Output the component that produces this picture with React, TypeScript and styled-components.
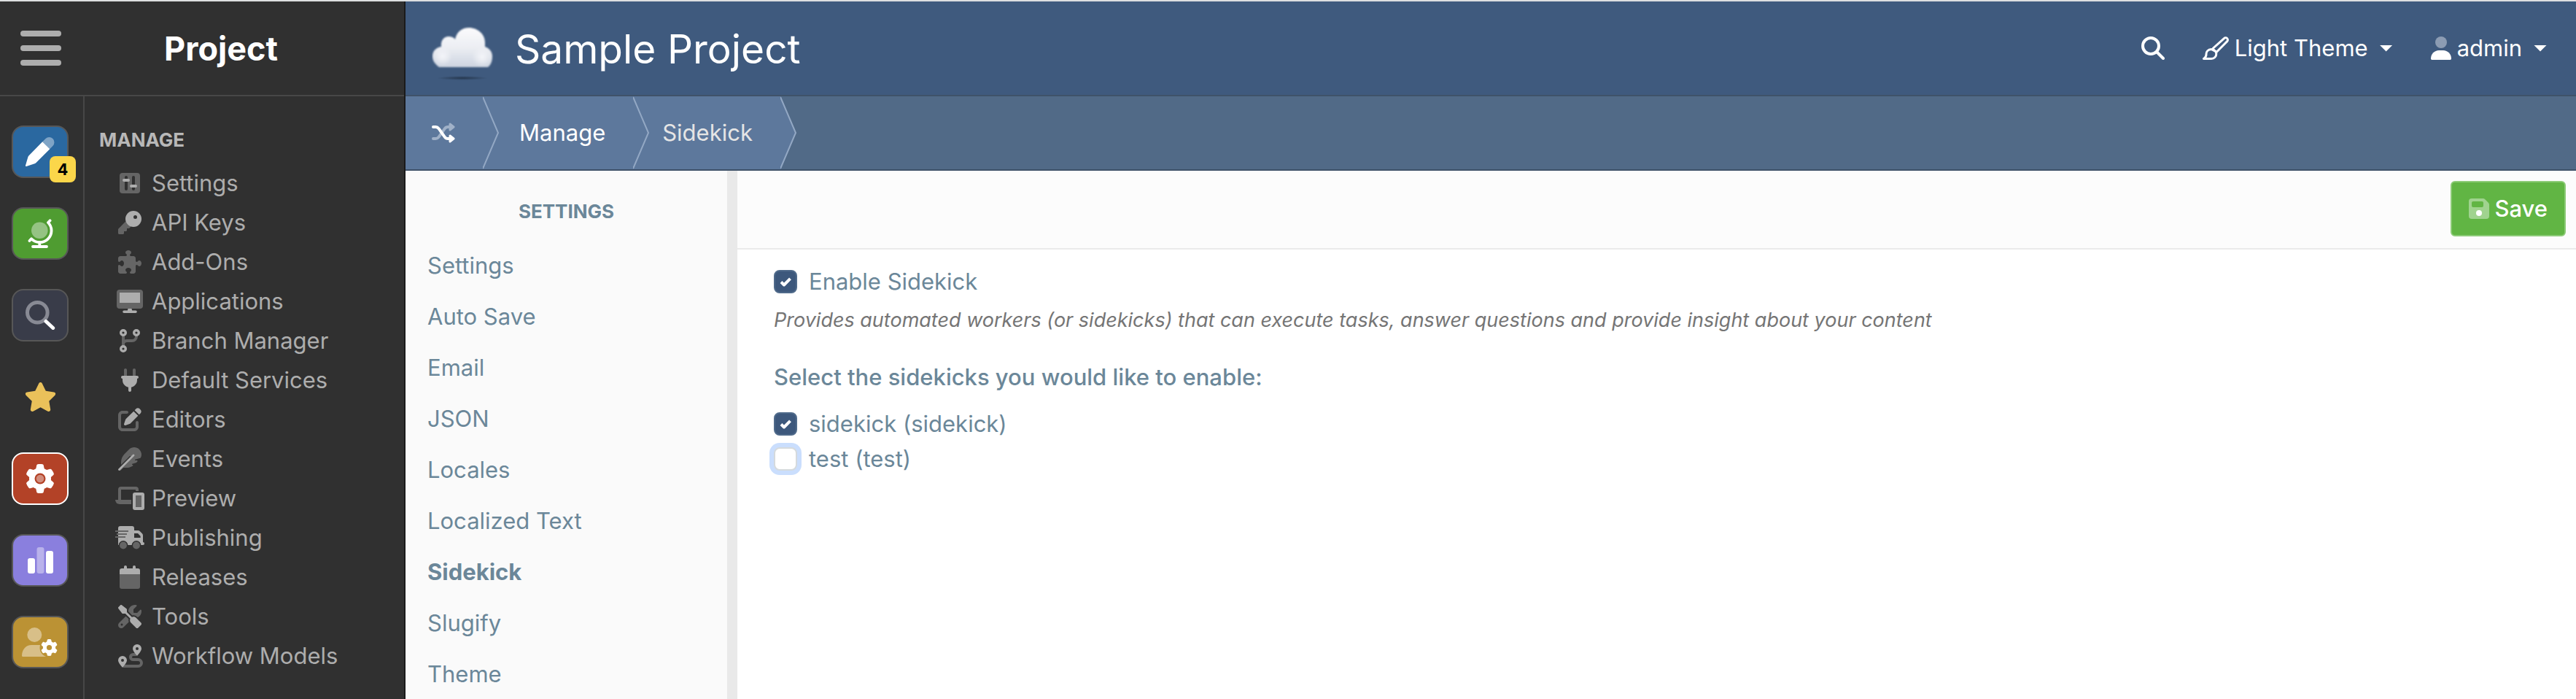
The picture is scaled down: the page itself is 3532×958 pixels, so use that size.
import React from "react";
import styled, { createGlobalStyle } from "styled-components";
import { FaFeather, FaGear, FaPuzzlePiece } from "react-icons/fa6";

const GlobalStyle = createGlobalStyle`
  *, *::before, *::after { box-sizing: border-box; }
  body {
    margin: 0;
    font-family: Inter, "Liberation Sans", sans-serif;
    font-size: 31px;
    line-height: 40px;
    color: #6b8799;
    background: #fff;
  }
  ul, h1, h2, h3, p { margin: 0; padding: 0; }
  ul { list-style: none; }
  a { color: inherit; text-decoration: none; }
  button { font: inherit; color: inherit; background: none; border: 0; padding: 0; margin: 0; cursor: pointer; }
  svg { display: block; flex: none; }
`;

const Shell = styled.div`
  display: flex;
  min-height: 100vh;
  border-top: 2px solid #dddfe0;
`;

/* Dark navigation column */

const Sidebar = styled.aside`
  display: flex;
  flex-direction: column;
  flex: none;
  width: 556px;
  background: #303030;
  border-right: 2px solid #1a1a1a;
`;

const SidebarHeader = styled.div`
  display: flex;
  align-items: center;
  height: 130px;
  padding: 0 32px 0 28px;
  border-bottom: 2px solid #474747;
`;

const MenuButton = styled.button`
  display: flex;
  flex-direction: column;
  gap: 12px;
  width: 56px;
`;

const MenuBar = styled.span`
  height: 8px;
  border-radius: 4px;
  background: #adadad;
`;

const SidebarTitle = styled.h2`
  flex: 1;
  padding-top: 2px;
  text-align: center;
  color: #fff;
  font-size: 45px;
  font-weight: 700;
  line-height: 60px;
`;

const SidebarBody = styled.div`
  display: flex;
  flex: 1;
`;

const Rail = styled.nav`
  display: flex;
  flex-direction: column;
  align-items: center;
  gap: 40px;
  width: 116px;
  padding: 40px 4px 0 0;
  border-right: 2px solid #474747;
`;

const RailButton = styled.button<{ $bg?: string; $edge?: string }>`
  position: relative;
  display: flex;
  align-items: center;
  justify-content: center;
  width: 78px;
  height: 72px;
  color: #fff;
  background: ${(p) => p.$bg || "transparent"};
  border: 2px solid ${(p) => p.$edge || "transparent"};
  border-radius: 16px;
`;

const Badge = styled.span`
  position: absolute;
  right: -12px;
  bottom: -8px;
  width: 36px;
  height: 36px;
  border-radius: 8px;
  background: #fbd64a;
  color: #000;
  font-size: 22px;
  font-weight: 700;
  line-height: 36px;
  text-align: center;
`;

const ManageNav = styled.nav`
  flex: 1;
  padding: 40px 0 0 20px;
  color: #adadad;
`;

const ManageHeading = styled.h3`
  margin-bottom: 12px;
  font-size: 26px;
  font-weight: 700;
  line-height: 40px;
  color: #b8b8b8;
`;

const ManageLink = styled.a`
  display: flex;
  align-items: center;
  gap: 10px;
  height: 54px;
  padding-left: 22px;
  white-space: nowrap;
`;

/* Main column */

const Main = styled.div`
  display: flex;
  flex-direction: column;
  flex: 1;
  min-width: 0;
`;

const TopBar = styled.header`
  display: flex;
  align-items: center;
  height: 130px;
  padding: 0 40px 0 36px;
  color: #fff;
  background: #3f5a7e;
  border-bottom: 2px solid #3f5269;
`;

const ProjectTitle = styled.h1`
  flex: 1;
  margin-left: 26px;
  padding-top: 2px;
  font-size: 55px;
  font-weight: 400;
  line-height: 72px;
`;

const TopActions = styled.div`
  display: flex;
  align-items: center;
  gap: 52px;
`;

const TopButton = styled.button`
  display: flex;
  align-items: center;
  gap: 8px;
  white-space: nowrap;
`;

const Caret = styled.span`
  width: 18px;
  height: 9px;
  margin-left: 8px;
  background: currentColor;
  clip-path: polygon(0 0, 100% 0, 50% 100%);
`;

const Crumbs = styled.nav`
  display: flex;
  height: 102px;
  color: #fff;
  background: #516a87;
  border-bottom: 2px solid #3f5269;
`;

const Crumb = styled.a<{ $start: number; $muted?: boolean }>`
  position: relative;
  display: flex;
  align-items: center;
  padding: 0 38px 0 ${(p) => p.$start}px;
  color: ${(p) => (p.$muted ? "#e5e5e5" : "#fff")};
  background: #5d789c;
`;

const Chevron = styled.svg`
  position: absolute;
  z-index: 1;
  left: 100%;
  top: 0;
`;

const Workspace = styled.div`
  display: flex;
  flex: 1;
`;

const SettingsPanel = styled.nav`
  flex: none;
  width: 455px;
  padding: 36px 0 0 30px;
  background: #fafafa;
  border-right: 14px solid #e9e9e9;
`;

const SettingsHeading = styled.h3`
  margin-bottom: 34px;
  padding-right: 30px;
  font-size: 26px;
  font-weight: 700;
  line-height: 40px;
  text-align: center;
`;

const SettingsList = styled.ul`
  display: flex;
  flex-direction: column;
  gap: 30px;
`;

const SettingsLink = styled.a<{ $active: boolean }>`
  display: block;
  font-weight: ${(p) => (p.$active ? 700 : 400)};
`;

const Content = styled.main`
  flex: 1;
  min-width: 0;
`;

const Toolbar = styled.div`
  display: flex;
  justify-content: flex-end;
  padding: 14px 14px 16px;
  background: #fcfcfc;
  border-bottom: 2px solid #ebebeb;
`;

const SaveButton = styled.button`
  display: flex;
  align-items: center;
  justify-content: center;
  gap: 7px;
  height: 76px;
  padding: 0 23px;
  color: #fff;
  font-weight: 500;
  background: #61b544;
  border: 2px solid #8ccb77;
  border-radius: 6px;
`;

const Form = styled.form`
  padding: 24px 50px;
`;

const CheckRow = styled.label`
  display: flex;
  align-items: center;
  gap: 16px;
  width: fit-content;
`;

const CheckList = styled.div`
  display: flex;
  flex-direction: column;
  gap: 8px;
  margin-top: 24px;
`;

const CheckWrap = styled.span`
  position: relative;
  display: flex;
`;

const CheckInput = styled.input<{ $halo?: boolean }>`
  appearance: none;
  width: 32px;
  height: 32px;
  margin: 0;
  background: #fff;
  border: 2px solid #d5dadd;
  border-radius: 8px;
  box-shadow: ${(p) => (p.$halo ? "0 0 0 6px #cadefd" : "none")};
  &:checked { background: #3d587c; border-color: #4f6a8a; }
  &:checked + svg { visibility: visible; }
`;

const CheckMark = styled.svg`
  position: absolute;
  inset: 0;
  visibility: hidden;
  pointer-events: none;
`;

const Hint = styled.p`
  margin-top: 13px;
  color: #757575;
  font-size: 27px;
  font-style: italic;
`;

const FormHeading = styled.h3`
  margin-top: 38px;
  font-size: 31px;
  font-weight: 500;
`;

/* Two-tone icons of the dark column */

const HI = "#adadad";
const LO = "#656565";
const BG = "#303030";

const Glyph = ({ children }: { children: React.ReactNode }) => (
  <svg width="40" height="32" viewBox="0 0 40 32" aria-hidden="true">{children}</svg>
);

const Em = ({ x = 4, children }: { x?: number; children: React.ReactNode }) => (
  <Glyph><g transform={`translate(${x} 0) scale(0.0625)`}>{children}</g></Glyph>
);

const manageItems: { label: string; icon: React.ReactNode }[] = [
  {
    label: "Settings",
    icon: (
      <Glyph>
        <rect x="6" y="2" width="28" height="28" rx="4" fill={LO} />
        <path d="M15 8v16M25 8v16" stroke={BG} strokeWidth="4" strokeLinecap="round" />
        <path d="M12 12h6M22 20h6" stroke={HI} strokeWidth="4" strokeLinecap="round" />
      </Glyph>
    ),
  },
  {
    label: "API Keys",
    icon: (
      <Em>
        <path fill={LO} d="M168.300 229.700L7 391c-4.500 4.500-7 10.600-7 17v80c0 13.300 10.700 24 24 24h80c13.300 0 24-10.700 24-24v-40h40c13.300 0 24-10.700 24-24v-40h40c6.400 0 12.500-2.500 17-7l33.300-33.300z" />
        <circle cx="336" cy="176" r="176" fill={HI} />
        <circle cx="376" cy="136" r="40" fill={BG} />
      </Em>
    ),
  },
  { label: "Add-Ons", icon: <Glyph><FaPuzzlePiece x="4" size={32} color={LO} /></Glyph> },
  {
    label: "Applications",
    icon: (
      <Glyph>
        <rect x="2" y="0" width="36" height="26" rx="4" fill={LO} />
        <path d="M6 4h28v14H6z" fill={HI} />
        <path d="M17.500 26h5l.7 2.400H28a1.800 1.800 0 0 1 0 3.600H12a1.800 1.800 0 0 1 0-3.600h4.800z" fill={HI} />
      </Glyph>
    ),
  },
  {
    label: "Branch Manager",
    icon: (
      <Glyph>
        <path d="M11 9v14M29 9v1a6 6 0 0 1-6 6H17a6 6 0 0 0-6 3" fill="none" stroke={LO} strokeWidth="4" />
        <g fill={BG} stroke={HI} strokeWidth="3.4">
          <circle cx="11" cy="5" r="3.300" />
          <circle cx="29" cy="5" r="3.300" />
          <circle cx="11" cy="27" r="3.300" />
        </g>
      </Glyph>
    ),
  },
  {
    label: "Default Services",
    icon: (
      <Em x={8}>
        <path fill={LO} d="M96 0C78.300 0 64 14.300 64 32v128h64V32c0-17.700-14.300-32-32-32zM288 0c-17.700 0-32 14.300-32 32v128h64V32c0-17.700-14.300-32-32-32z" />
        <path fill={HI} d="M32 160c-17.700 0-32 14.300-32 32s14.300 32 32 32v32c0 77.400 55 142 128 156.800V480c0 17.700 14.300 32 32 32s32-14.300 32-32v-67.200C297 398 352 333.400 352 256v-32c17.700 0 32-14.300 32-32s-14.300-32-32-32H32z" />
      </Em>
    ),
  },
  {
    label: "Editors",
    icon: (
      <Em>
        <path fill={LO} d="M96 64C43 64 0 107 0 160v256c0 53 43 96 96 96h256c53 0 96-43 96-96v-96c0-17.700-14.300-32-32-32s-32 14.300-32 32v96c0 17.700-14.300 32-32 32H96c-17.700 0-32-14.300-32-32V160c0-17.700 14.300-32 32-32h96c17.700 0 32-14.300 32-32s-14.300-32-32-32H96z" />
        <path fill={HI} d="M471.600 21.700c-21.900-21.900-57.300-21.900-79.200 0l-30.100 30 97.900 97.900 30.100-30.100c21.900-21.900 21.900-57.300 0-79.200l-18.700-18.600zM172.400 241.700c-6.100 6.100-10.800 13.600-13.500 21.900l-29.600 88.800c-2.900 8.600-.6 18.100 5.800 24.600s15.900 8.700 24.600 5.800l88.800-29.600c8.200-2.700 15.700-7.400 21.900-13.500l167.300-167.400-98-98-167.300 167.400z" />
      </Em>
    ),
  },
  {
    label: "Events",
    icon: (
      <Glyph>
        <FaFeather x="4" size={32} color={LO} />
        <path d="M5.500 30.500L25 11" stroke={HI} strokeWidth="2.800" strokeLinecap="round" />
      </Glyph>
    ),
  },
  {
    label: "Preview",
    icon: (
      <Glyph>
        <path d="M6 19V4a2 2 0 0 1 2-2h20a2 2 0 0 1 2 2v2" fill="none" stroke={LO} strokeWidth="4" />
        <path d="M0 18h22v6H6a6 6 0 0 1-6-6z" fill={LO} />
        <rect x="24" y="8" width="16" height="24" rx="3" fill={HI} />
        <path d="M28 12h8v16h-8z" fill={LO} />
      </Glyph>
    ),
  },
  {
    label: "Publishing",
    icon: (
      <Glyph>
        <path d="M4 3a3 3 0 0 1 3-3h16a3 3 0 0 1 3 3v3h5.200a4 4 0 0 1 2.800 1.200l3 3a4 4 0 0 1 1 2.800v9a2 2 0 0 1 0 4H4z" fill={HI} />
        <path d="M26 10h5l3.600 3.800V16H26z" fill={BG} />
        <path d="M0 7h18M2 11h14M0 15h14" stroke={LO} strokeWidth="2" />
        <g fill={LO} stroke={BG} strokeWidth="1.500">
          <circle cx="11" cy="26.500" r="5.700" />
          <circle cx="29" cy="26.500" r="5.700" />
        </g>
      </Glyph>
    ),
  },
  {
    label: "Releases",
    icon: (
      <Glyph>
        <path d="M6 12h28v17a3 3 0 0 1-3 3H9a3 3 0 0 1-3-3z" fill={LO} />
        <path d="M6 12V7a3 3 0 0 1 3-3h3V2a2 2 0 0 1 4 0v2h8V2a2 2 0 0 1 4 0v2h3a3 3 0 0 1 3 3v5z" fill={HI} />
      </Glyph>
    ),
  },
  {
    label: "Tools",
    icon: (
      <Em>
        <path fill={LO} fillRule="evenodd" d="M19.900 396.100C7.200 408.800 0 426.100 0 444.100 0 481.600 30.400 512 67.900 512c18 0 35.300-7.200 48-19.900l117.800-117.800c-7.800-20.900-9-43.600-3.600-65.100l-61.700-61.700L19.900 396.100zM512 144c0-10.500-1.100-20.700-3.200-30.500-2.400-11.200-16.100-14.100-24.200-6l-63.900 63.900c-3 3-7.100 4.700-11.300 4.700H352c-8.800 0-16-7.200-16-16v-57.500c0-4.200 1.700-8.300 4.700-11.300l63.900-63.900c8.100-8.100 5.200-21.800-6-24.200C388.700 1.100 378.500 0 368 0c-79.500 0-144 64.500-144 144v.8l85.300 85.300c36-9.100 75.800.5 104 28.700l15.700 15.700c49-23 83-72.800 83-130.500zM56 432a24 24 0 1 1 48 0 24 24 0 1 1-48 0z" />
        <path fill={HI} d="M78.600 5C69.100-2.400 55.600-1.500 47 7L7 47c-8.500 8.500-9.400 22-2.100 31.600l80 104c4.500 5.900 11.600 9.400 19 9.400H158l109 109c-14.700 29-10 65.400 14.300 89.600l112 112c12.500 12.500 32.800 12.500 45.300 0l64-64c12.500-12.500 12.500-32.800 0-45.300l-112-112c-24.200-24.200-60.600-29-89.600-14.300L192 158v-54c0-7.500-3.500-14.500-9.400-19L78.600 5z" />
      </Em>
    ),
  },
  {
    label: "Workflow Models",
    icon: (
      <Glyph>
        <path d="M11 30h20.500a4.500 4.500 0 0 0 0-9H24.500a3.500 3.500 0 0 1 0-7H29" fill="none" stroke={LO} strokeWidth="4" />
        <g fill={HI} fillRule="evenodd">
          <path d="M10 32c-1-1.500-6-6.500-6-10a6 6 0 0 1 12 0c0 3.500-5 8.500-6 10zM10 24a2 2 0 1 0 0-4 2 2 0 0 0 0 4z" />
          <path d="M30 16c-1-1.500-6-6.500-6-10a6 6 0 0 1 12 0c0 3.500-5 8.500-6 10zM30 8a2 2 0 1 0 0-4 2 2 0 0 0 0 4z" />
        </g>
      </Glyph>
    ),
  },
];

/* Icons of the rail */

const RailGlyph = ({ children }: { children: React.ReactNode }) => (
  <svg width="50" height="40" viewBox="-1 0 50 40" aria-hidden="true">{children}</svg>
);

const railItems: { label: string; bg?: string; edge?: string; badge?: string; icon: React.ReactNode }[] = [
  {
    label: "Edit",
    bg: "#2a68a0",
    edge: "#575757",
    badge: "4",
    icon: (
      <RailGlyph>
        <path d="M27.200 6.300L37.300 16.200 18.500 35a5 5 0 0 1-2 1.300L5.200 39.900A1 1 0 0 1 4 38.700L7.300 27.400a5 5 0 0 1 1.300-2.200z" fill="#fff" />
        <path d="M27.200 6.300l4.300-4.200a7 7 0 0 1 9.900 0 7 7 0 0 1 0 9.900l-4.100 4.200z" fill="#fff" opacity=".4" />
      </RailGlyph>
    ),
  },
  {
    label: "Sites",
    bg: "#4f9c31",
    edge: "#575757",
    icon: (
      <RailGlyph>
        <circle cx="23.300" cy="15.800" r="11.300" fill="#fff" opacity=".4" />
        <path d="M37.600 2.300L35 5a15.800 15.800 0 0 1-23 22.300L9.500 30M23.300 32v6M14 38h19" fill="none" stroke="#fff" strokeWidth="3.800" strokeLinecap="round" strokeLinejoin="round" />
      </RailGlyph>
    ),
  },
  {
    label: "Search",
    bg: "#393c49",
    edge: "#575757",
    icon: (
      <RailGlyph>
        <circle cx="20.300" cy="16.300" r="13.800" fill="none" stroke="#888a94" strokeWidth="5" />
        <path d="M32 28.500l9.700 9" stroke="#fff" strokeWidth="5" strokeLinecap="round" />
      </RailGlyph>
    ),
  },
  {
    label: "Favorites",
    icon: (
      <svg width="45" height="40" viewBox="0 0 576 512" aria-hidden="true">
        <path fill="#eac15a" d="M316.900 18C311.600 7 300.400 0 288.100 0s-23.400 7-28.800 18L195 150.300 51.400 171.500c-12 1.800-22 10.200-25.700 21.700s-.7 24.200 7.900 32.700L137.800 329l-24.600 145.700c-2 12 3 24.200 12.900 31.300s23 8 33.800 2.300l128.300-68.500 128.300 68.500c10.800 5.700 23.900 4.900 33.800-2.300s14.900-19.300 12.900-31.300L438.500 329l104.200-103.100c8.600-8.500 11.700-21.200 7.900-32.700s-13.700-19.900-25.700-21.700l-143.700-21.200L316.900 18z" />
      </svg>
    ),
  },
  {
    label: "Manage",
    bg: "#b34227",
    edge: "#ffffff",
    icon: (
      <RailGlyph>
        <FaGear x="4" size={40} color="#fff" />
        <circle cx="24" cy="20" r="7.500" fill="#b34227" />
        <circle cx="24" cy="20" r="5.300" fill="#fff" opacity=".4" />
      </RailGlyph>
    ),
  },
  {
    label: "Reports",
    bg: "#8a7fde",
    edge: "#575757",
    icon: (
      <RailGlyph>
        <rect x="7" y="17" width="10" height="21" rx="3" fill="#fff" />
        <rect x="19.500" y="2" width="10" height="36" rx="3" fill="#fff" opacity=".4" />
        <rect x="32" y="7" width="10" height="31" rx="3" fill="#fff" />
      </RailGlyph>
    ),
  },
  {
    label: "Users",
    bg: "#bb9234",
    edge: "#575757",
    icon: (
      <RailGlyph>
        <g fill="#d8bf88">
          <circle cx="16.300" cy="10" r="10" />
          <path d="M12 24h12c3 0 6 1 8 3v13H.5A1.500 1.500 0 0 1-1 38.500C-1 30 5 24 12 24z" />
        </g>
        <circle cx="36.500" cy="27.700" r="13" fill="#bb9234" />
        <FaGear x="25" y="16" size={23} color="#fff" />
      </RailGlyph>
    ),
  },
];

const CloudLogo = () => (
  <svg width="88" height="90" viewBox="0 -14 88 90" aria-hidden="true">
    <defs>
      <linearGradient id="cloudBody" x1="0" y1="0" x2="0" y2="1">
        <stop offset="0" stopColor="#fbfbfc" />
        <stop offset=".5" stopColor="#eceef3" />
        <stop offset="1" stopColor="#cdd4e0" />
      </linearGradient>
      <radialGradient id="cloudPuff">
        <stop offset="0" stopColor="#f4f5f9" />
        <stop offset="1" stopColor="#f4f5f9" stopOpacity="0" />
      </radialGradient>
      <radialGradient id="cloudShadow">
        <stop offset="0" stopColor="#26384f" />
        <stop offset="1" stopColor="#26384f" stopOpacity="0" />
      </radialGradient>
      <filter id="cloudSoft" x="-5%" y="-5%" width="110%" height="110%">
        <feGaussianBlur stdDeviation=".8" />
      </filter>
    </defs>
    <g filter="url(#cloudSoft)">
      <path d="M10 57C5 53 1 49 1 42c0-7 5-12 12-13-1-9 4-14 10-14 4 0 7 1 9 4C34 9 41 3 51 3c12 0 22 9 22 20v6c6 2 10 7 10 13 0 7-2 12-6 15z" fill="url(#cloudBody)" />
      <circle cx="69" cy="43" r="14" fill="url(#cloudPuff)" />
      <circle cx="15" cy="42" r="13" fill="url(#cloudPuff)" />
    </g>
    <ellipse cx="42" cy="72" rx="35" ry="3" fill="url(#cloudShadow)" />
  </svg>
);

const settingsItems = ["Settings", "Auto Save", "Email", "JSON", "Locales", "Localized Text", "Sidekick", "Slugify", "Theme"];

const CrumbEdge = () => (
  <Chevron width="23" height="100" viewBox="0 0 23 100" aria-hidden="true">
    <path d="M0 0L21 50 0 100z" fill="#5d789c" />
    <path d="M0 1L21 50 0 99" fill="none" stroke="#93a8c4" strokeWidth="2" />
  </Chevron>
);

const Check = ({ label, checked, halo }: { label: string; checked?: boolean; halo?: boolean }) => (
  <CheckRow>
    <CheckWrap>
      <CheckInput type="checkbox" defaultChecked={checked} $halo={halo} />
      <CheckMark width="32" height="32" viewBox="0 0 32 32" aria-hidden="true">
        <path d="M10 16.500l4 4 8.500-8.700" fill="none" stroke="#fff" strokeWidth="4" strokeLinejoin="round" />
      </CheckMark>
    </CheckWrap>
    {label}
  </CheckRow>
);

export default function App() {
  return (
    <>
      <GlobalStyle />
      <Shell>
        <Sidebar>
          <SidebarHeader>
            <MenuButton type="button" aria-label="Menu">
              <MenuBar />
              <MenuBar />
              <MenuBar />
            </MenuButton>
            <SidebarTitle>Project</SidebarTitle>
          </SidebarHeader>
          <SidebarBody>
            <Rail>
              {railItems.map((item) => (
                <RailButton key={item.label} type="button" aria-label={item.label} $bg={item.bg} $edge={item.edge}>
                  {item.icon}
                  {item.badge && <Badge>{item.badge}</Badge>}
                </RailButton>
              ))}
            </Rail>
            <ManageNav>
              <ManageHeading>MANAGE</ManageHeading>
              <ul>
                {manageItems.map((item) => (
                  <li key={item.label}>
                    <ManageLink href="#">
                      {item.icon}
                      {item.label}
                    </ManageLink>
                  </li>
                ))}
              </ul>
            </ManageNav>
          </SidebarBody>
        </Sidebar>
        <Main>
          <TopBar>
            <CloudLogo />
            <ProjectTitle>Sample Project</ProjectTitle>
            <TopActions>
              <TopButton type="button" aria-label="Search">
                <svg width="32" height="32" viewBox="0 0 32 32" fill="none" stroke="#fff" strokeWidth="4" aria-hidden="true">
                  <circle cx="13" cy="13" r="11" />
                  <path d="M21 21l9 9" strokeLinecap="round" />
                </svg>
              </TopButton>
              <TopButton type="button">
                <svg width="36" height="32" viewBox="0 0 36 32" fill="none" stroke="#fff" strokeWidth="3" strokeLinejoin="round" aria-hidden="true">
                  <path d="M14 16.500L29.500 2.600a2.900 2.900 0 0 1 4.200 4L19 21.500" />
                  <path d="M12 17.500c-4.500.3-7.200 3.200-7 7 .1 2.500-.6 4.500-3.500 6H12c4 0 6.800-3 6.800-6.600 0-1.400-.3-2.300-1-3.400z" />
                  <path d="M13 16l6.500 6" />
                </svg>
                Light Theme
                <Caret />
              </TopButton>
              <TopButton type="button">
                <svg width="28" height="32" viewBox="0 0 28 32" aria-hidden="true">
                  <circle cx="14" cy="8" r="8" fill="#8c9cb3" />
                  <path d="M11 19h6c6 0 11 5 11 11.200 0 1-.8 1.800-1.800 1.800H1.800C.8 32 0 31.200 0 30.200 0 24 5 19 11 19z" fill="#fff" />
                </svg>
                admin
                <Caret />
              </TopButton>
            </TopActions>
          </TopBar>
          <Crumbs aria-label="Breadcrumb">
            <Crumb href="#" $start={36} aria-label="Switch project">
              <svg width="32" height="28" viewBox="0 0 32 28" fill="none" strokeWidth="4" strokeLinecap="round" strokeLinejoin="round" aria-hidden="true">
                <path d="M2 22h3.500c2 0 3-.8 4.200-2.400l8-11.200C19 6.600 20 6 22 6h4" stroke="#a0b1c8" />
                <path d="M25 2l5 4-5 4z" fill="#a0b1c8" stroke="#a0b1c8" strokeWidth="3" />
                <path d="M2 6h3.500c2 0 3 .8 4.200 2.400l8 11.200C19 21.400 20 22 22 22h4" stroke="#fff" />
                <path d="M25 18l5 4-5 4z" fill="#fff" stroke="#fff" strokeWidth="3" />
              </svg>
              <CrumbEdge />
            </Crumb>
            <Crumb href="#" $start={50}>
              Manage
              <CrumbEdge />
            </Crumb>
            <Crumb href="#" $start={40} $muted aria-current="page">
              Sidekick
              <CrumbEdge />
            </Crumb>
          </Crumbs>
          <Workspace>
            <SettingsPanel>
              <SettingsHeading>SETTINGS</SettingsHeading>
              <SettingsList>
                {settingsItems.map((item) => (
                  <li key={item}>
                    <SettingsLink href="#" $active={item === "Sidekick"}>{item}</SettingsLink>
                  </li>
                ))}
              </SettingsList>
            </SettingsPanel>
            <Content>
              <Toolbar>
                <SaveButton type="submit" form="sidekick-settings">
                  <svg width="28" height="28" viewBox="0 0 28 28" aria-hidden="true">
                    <path fillRule="evenodd" d="M4 0h15.500a4 4 0 0 1 2.800 1.200l4.500 4.500A4 4 0 0 1 28 8.500V24a4 4 0 0 1-4 4H4a4 4 0 0 1-4-4V4a4 4 0 0 1 4-4zM6 4a2 2 0 0 0-2 2v4a2 2 0 0 0 2 2h12a2 2 0 0 0 2-2V6a2 2 0 0 0-2-2z" fill="#a0d38f" />
                    <circle cx="14" cy="20" r="4" fill="#fff" />
                  </svg>
                  Save
                </SaveButton>
              </Toolbar>
              <Form id="sidekick-settings">
                <Check label="Enable Sidekick" checked />
                <Hint>
                  Provides automated workers (or sidekicks) that can execute tasks, answer questions and provide insight about your content
                </Hint>
                <FormHeading>Select the sidekicks you would like to enable:</FormHeading>
                <CheckList>
                  <Check label="sidekick (sidekick)" checked />
                  <Check label="test (test)" halo />
                </CheckList>
              </Form>
            </Content>
          </Workspace>
        </Main>
      </Shell>
    </>
  );
}
